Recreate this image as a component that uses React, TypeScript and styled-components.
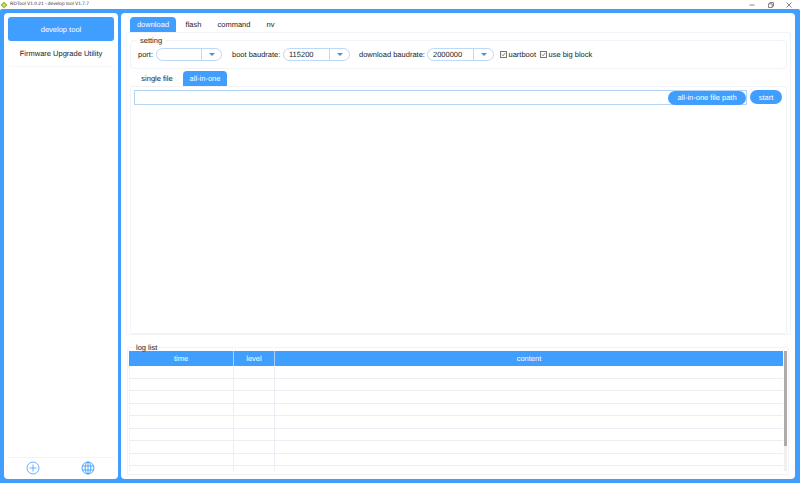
import React from 'react'
import styled, { createGlobalStyle } from 'styled-components'

const BLUE = '#409eff'
const LINE = '#ebeef5'

const Global = createGlobalStyle`
  html, body { margin: 0; padding: 0; height: 100%; background: #fff; }
  body {
    font-family: "Liberation Sans", Arial, sans-serif;
    font-size: 7.5px;
    color: #222;
    overflow: hidden;
    text-rendering: geometricPrecision;
  }
`

const S = {
  Window: styled.div`
    width: 800px;
    height: 483px;
    display: flex;
    flex-direction: column;
  `,
  TitleBar: styled.div`
    height: 9px;
    display: flex;
    align-items: center;
    padding: 0 0 0 0;
    gap: 2px;
    font-size: 4.8px;
    color: #333;
    background: #fff;
  `,
  TitleText: styled.span`
    flex: 1;
    white-space: nowrap;
  `,
  WinButtons: styled.div`
    display: flex;
    align-items: center;
    gap: 12.5px;
    padding-right: 8px;
  `,
  Body: styled.div`
    flex: 1;
    min-height: 0;
    background: ${BLUE};
    display: flex;
    gap: 3px;
    padding: 4px 5px 4px 4px;
    border-radius: 2px 2px 0 0;
  `,
  Side: styled.div`
    width: 114px;
    background: #fff;
    border-radius: 4px;
    display: flex;
    flex-direction: column;
    padding: 4px 4px 0;
    box-sizing: border-box;
  `,
  SideItem: styled.div<{ $active?: boolean }>`
    height: ${({ $active }) => ($active ? 24 : 25)}px;
    display: flex;
    align-items: center;
    justify-content: center;
    border-radius: 3px;
    white-space: nowrap;
    background: ${({ $active }) => ($active ? BLUE : '#fff')};
    color: ${({ $active }) => ($active ? '#fff' : '#222')};
    border-bottom: ${({ $active }) => ($active ? '0' : `1px solid #f6f7fa`)};
  `,
  SideFooter: styled.div`
    margin-top: auto;
    height: 22px;
    box-sizing: border-box;
    border-top: 1px solid #f2f3f6;
    display: flex;
    align-items: center;
    justify-content: space-between;
    padding: 0 19px 2px 18px;
  `,
  Main: styled.div`
    flex: 1;
    min-width: 0;
    background: #fff;
    border-radius: 4px;
    display: flex;
    flex-direction: column;
    padding: 4px 4px 4px 5px;
    box-sizing: border-box;
  `,
  Tabs: styled.div<{ $indent: number }>`
    display: flex;
    height: 15px;
    padding-left: ${({ $indent }) => $indent}px;
    flex-shrink: 0;
  `,
  Tab: styled.div<{ $active?: boolean; $w: number }>`
    width: ${({ $w }) => $w}px;
    display: flex;
    align-items: center;
    justify-content: center;
    border-radius: 4px 4px 0 0;
    background: ${({ $active }) => ($active ? BLUE : 'transparent')};
    color: ${({ $active }) => ($active ? '#fff' : '#222')};
  `,
  TabPane: styled.div`
    flex: 1;
    min-height: 0;
    border: 1px solid #f0f3f8;
    border-radius: 2px;
    padding: 7px 0 0 3px;
    display: flex;
    flex-direction: column;
  `,
  Group: styled.div`
    height: 29px;
    flex-shrink: 0;
    border: 1px solid #f2f3f6;
    border-radius: 4px;
    margin-right: 3px;
    position: relative;
    display: flex;
    align-items: center;
    padding: 0 0 0 7px;
    box-sizing: border-box;
  `,
  Legend: styled.span`
    position: absolute;
    top: -6px;
    left: 6px;
    background: #fff;
    padding: 0 3px;
    line-height: 11px;
  `,
  Label: styled.span<{ $w: number }>`
    width: ${({ $w }) => $w}px;
    white-space: nowrap;
  `,
  Select: styled.div<{ $w: number; $gap: number }>`
    width: ${({ $w }) => $w}px;
    margin-right: ${({ $gap }) => $gap}px;
    height: 13px;
    box-sizing: border-box;
    border: 1px solid #bcd9f5;
    border-radius: 7px;
    display: flex;
    align-items: center;
  `,
  SelectValue: styled.span`
    flex: 1;
    padding-left: 5px;
  `,
  SelectArrow: styled.span`
    width: 19px;
    height: 100%;
    border-left: 1px solid #bcd9f5;
    display: flex;
    align-items: center;
    justify-content: center;
    &::after {
      content: '';
      border-left: 3px solid transparent;
      border-right: 3px solid transparent;
      border-top: 3.5px solid #4a90d9;
    }
  `,
  Check: styled.label<{ $w: number }>`
    width: ${({ $w }) => $w}px;
    display: flex;
    align-items: center;
    gap: 1.5px;
    white-space: nowrap;
  `,
  Box: styled.span`
    width: 5px;
    height: 5px;
    border: 1px solid #777;
    display: flex;
    align-items: center;
    justify-content: center;
  `,
  SubTabs: styled.div`
    margin-top: 2px;
    display: flex;
    flex-direction: column;
    flex: 1;
    min-height: 0;
  `,
  SubPane: styled.div`
    flex: 1;
    border: 1px solid #f2f3f6;
    margin-right: 3px;
    border-radius: 2px;
    padding: 3px 4px 0 3px;
  `,
  PathRow: styled.div`
    display: flex;
    align-items: flex-start;
    gap: 3px;
  `,
  PathInput: styled.div`
    flex: 1;
    height: 15px;
    box-sizing: border-box;
    border: 1px solid #b3d4f3;
    display: flex;
    justify-content: flex-end;
    align-items: center;
  `,
  Pill: styled.div<{ $w: number }>`
    width: ${({ $w }) => $w}px;
    height: 14px;
    border-radius: 7px;
    background: ${BLUE};
    color: #fff;
    display: flex;
    align-items: center;
    justify-content: center;
    white-space: nowrap;
    flex-shrink: 0;
  `,
  Log: styled.div`
    height: 128px;
    flex-shrink: 0;
    margin: 12px 2px 0 1px;
    position: relative;
    border: 1px solid #f2f3f6;
    border-radius: 2px;
    padding: 3px 0 3px 1px;
    box-sizing: border-box;
    display: flex;
    flex-direction: column;
  `,
  LogLegend: styled.span`
    position: absolute;
    top: -5px;
    left: 7px;
    color: #222;
    line-height: 9px;
    padding: 0 1px;
  `,
  LogBody: styled.div`
    display: flex;
    flex: 1;
    min-height: 0;
  `,
  Table: styled.div`
    flex: 1;
    overflow: hidden;
    margin-right: 1px;
  `,
  Head: styled.div`
    display: grid;
    grid-template-columns: 105px 41px 1fr;
    height: 15px;
    background: ${BLUE};
    color: #fff;
    & > div {
      display: flex;
      align-items: center;
      justify-content: center;
      border-right: 1px solid #a9d0f7;
    }
    & > div:last-child { border-right: 0; }
  `,
  Row: styled.div`
    display: grid;
    grid-template-columns: 105px 41px 1fr;
    height: 12.5px;
    box-sizing: border-box;
    border-bottom: 1px solid ${LINE};
    & > div { border-right: 1px solid ${LINE}; }
    & > div:first-child { border-left: 1px solid #f4f5f8; }
    & > div:last-child { border-right: 0; }
  `,
  Scroll: styled.div`
    width: 3px;
    background: #f0f0f0;
    display: flex;
    margin-right: 1px;
  `,
  Thumb: styled.div`
    width: 100%;
    height: 95px;
    background: #ababab;
  `,
}

const AddIcon = () => (
  <svg width="14" height="14" viewBox="0 0 14 14" fill="none" stroke={BLUE} strokeWidth="0.8">
    <circle cx="7" cy="7" r="6" />
    <path d="M3.5 7h7M7 3.5v7" />
  </svg>
)

const GlobeIcon = () => (
  <svg width="14" height="14" viewBox="0 0 14 14" fill="none" stroke={BLUE} strokeWidth="0.9">
    <circle cx="7" cy="7" r="6" />
    <ellipse cx="7" cy="7" rx="2.8" ry="6" />
    <path d="M7 1v12M1.3 5h11.4M1.3 9h11.4" />
  </svg>
)

const AppIcon = () => (
  <svg width="8" height="8" viewBox="0 0 8 8">
    <path d="M4 0.5 7.5 4 4 7.5 0.5 4Z" fill="#9bbf3f" />
    <circle cx="4" cy="4" r="1.3" fill="#f2d36b" />
  </svg>
)

const Tick = () => (
  <svg width="5" height="5" viewBox="0 0 5 5" fill="none" stroke="#555" strokeWidth="0.7">
    <path d="M0.8 2.5 2 3.8 4.2 1" />
  </svg>
)

const Select = ({ w, gap, value }: { w: number; gap: number; value?: string }) => (
  <S.Select $w={w} $gap={gap}>
    <S.SelectValue>{value}</S.SelectValue>
    <S.SelectArrow />
  </S.Select>
)

const App = () => (
  <S.Window>
    <Global />
    <S.TitleBar>
      <AppIcon />
      <S.TitleText>RDTool V1.0.21 - develop tool V1.7.7</S.TitleText>
      <S.WinButtons>
        <svg width="6" height="6" viewBox="0 0 6 6" stroke="#555" strokeWidth="0.7"><path d="M0.5 3h5" /></svg>
        <svg width="6" height="6" viewBox="0 0 6 6" fill="none" stroke="#555" strokeWidth="0.7"><path d="M0.5 1.8h3.7v3.7H0.5zM1.8 1.8V0.5h3.7v3.7H4.2" /></svg>
        <svg width="6" height="6" viewBox="0 0 6 6" stroke="#555" strokeWidth="0.7"><path d="M0.5 0.5l5 5M5.5 0.5l-5 5" /></svg>
      </S.WinButtons>
    </S.TitleBar>
    <S.Body>
      <S.Side>
        <S.SideItem $active>develop tool</S.SideItem>
        <S.SideItem>Firmware Upgrade Utility</S.SideItem>
        <S.SideFooter>
          <AddIcon />
          <GlobeIcon />
        </S.SideFooter>
      </S.Side>
      <S.Main>
        <S.Tabs $indent={4}>
          <S.Tab $active $w={46}>download</S.Tab>
          <S.Tab $w={35}>flash</S.Tab>
          <S.Tab $w={46}>command</S.Tab>
          <S.Tab $w={27}>nv</S.Tab>
        </S.Tabs>
        <S.TabPane>
          <S.Group>
            <S.Legend>setting</S.Legend>
            <S.Label $w={18}>port:</S.Label>
            <Select w={66} gap={10} />
            <S.Label $w={51}>boot baudrate:</S.Label>
            <Select w={67} gap={9} value="115200" />
            <S.Label $w={68}>download baudrate:</S.Label>
            <Select w={67} gap={6} value="2000000" />
            <S.Check $w={40}><S.Box><Tick /></S.Box>uartboot</S.Check>
            <S.Check $w={60}><S.Box><Tick /></S.Box>use big block</S.Check>
          </S.Group>
          <S.SubTabs>
            <S.Tabs $indent={1}>
              <S.Tab $w={52}>single file</S.Tab>
              <S.Tab $active $w={44}>all-in-one</S.Tab>
            </S.Tabs>
            <S.SubPane>
              <S.PathRow>
                <S.PathInput><S.Pill $w={78}>all-in-one file path</S.Pill></S.PathInput>
                <S.Pill $w={32}>start</S.Pill>
              </S.PathRow>
            </S.SubPane>
          </S.SubTabs>
        </S.TabPane>
        <S.Log>
          <S.LogLegend>log list</S.LogLegend>
          <S.LogBody>
            <S.Table>
              <S.Head><div>time</div><div>level</div><div>content</div></S.Head>
              {Array.from({ length: 9 }).map((_, i) => (
                <S.Row key={i}><div /><div /><div /></S.Row>
              ))}
            </S.Table>
            <S.Scroll><S.Thumb /></S.Scroll>
          </S.LogBody>
        </S.Log>
      </S.Main>
    </S.Body>
  </S.Window>
)

export default App
